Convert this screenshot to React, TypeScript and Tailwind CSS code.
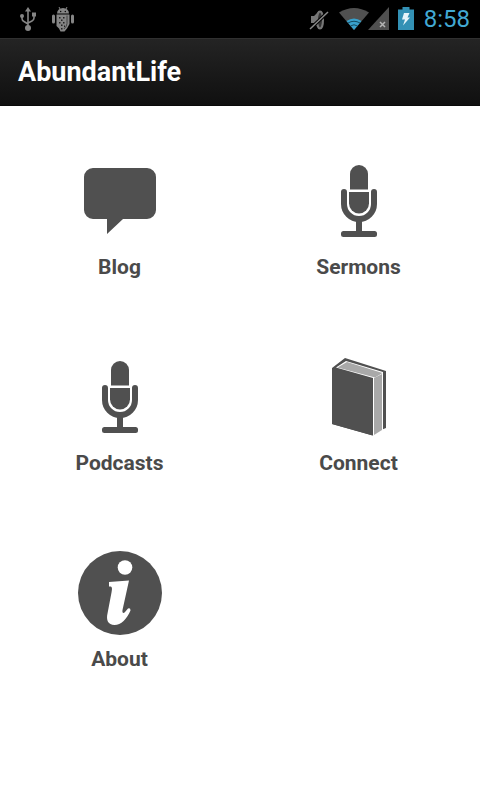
import { ReactNode } from "react";

function BlogIcon() {
  return (
    <svg viewBox="0 0 96 96" className="h-24 w-24 fill-[#505050]" aria-hidden="true">
      <path d="M21 15H75a9 9 0 0 1 9 9V57a9 9 0 0 1-9 9H51L35 81V66H21a9 9 0 0 1-9-9V24a9 9 0 0 1 9-9Z" />
    </svg>
  );
}

function MicIcon() {
  return (
    <svg viewBox="0 0 96 96" className="h-24 w-24 fill-[#505050]" aria-hidden="true">
      <path d="M39 36.5V21a9 9 0 0 1 18 0V36.5Z" />
      <path d="M38 39H58V50.5a10 10 0 0 1-20 0Z" />
      <path
        d="M33 39V51a15 15 0 0 0 30 0V39"
        fill="none"
        stroke="#505050"
        strokeWidth="6"
        strokeLinecap="round"
      />
      <rect x="45" y="67" width="6" height="13" />
      <rect x="30" y="78" width="36" height="6" rx="2.5" />
    </svg>
  );
}

function BookIcon() {
  return (
    <svg viewBox="0 0 96 96" className="h-24 w-24" aria-hidden="true">
      <path d="M21 19L34 9L75 22V79L70 81L62 86.5L21 75Z" fill="#505050" />
      <path d="M25 18.5L35 12L72 23V81L62 87V29Z" fill="#fff" />
      <path d="M26.5 18.5L36 13L71.5 24L64 28.5Z" fill="#a9a9a9" />
      <path d="M63 29L71 25V81L63 86Z" fill="#a9a9a9" />
      <path d="M21 19L61.5 30V86.5L21 75Z" fill="#505050" />
    </svg>
  );
}

function InfoIcon() {
  return (
    <svg viewBox="0 0 96 96" className="h-24 w-24" aria-hidden="true">
      <circle cx="48" cy="48" r="42" fill="#505050" />
      <circle cx="53" cy="22.5" r="7.3" fill="#fff" />
      <path
        d="M37 37L57 35.5L50.5 65C50 68 51.5 69 53 67L56 63.5Q58.5 62.5 58.5 65.5C55 74 49 80 42.5 80C36 80 34 75 35.5 68.5L39.500 47.5C40.5 42.5 40 41 37 41.5Z"
        fill="#fff"
      />
    </svg>
  );
}

function UsbIcon() {
  return (
    <svg viewBox="0 0 18 26" className="h-[26px] w-[18px]" fill="#858585" aria-hidden="true">
      <path d="M9 1L12 5.5H6Z" />
      <circle cx="9" cy="22" r="3" />
      <circle cx="3" cy="10" r="2" />
      <rect x="13" y="6.5" width="4" height="4" />
      <path
        d="M9 4V21M3 10V12.5Q3 14.5 5 15.5L9 18M15 9V12Q15 14 13 15L9 17"
        fill="none"
        stroke="#858585"
        strokeWidth="1.6"
      />
    </svg>
  );
}

function DebugIcon() {
  return (
    <svg viewBox="0 0 24 26" className="h-[26px] w-6" fill="#858585" aria-hidden="true">
      <path d="M6 7.5a6 5.5 0 0 1 12 0Z" />
      <path d="M8 1L9.5 4M16 1L14.5 4" stroke="#858585" />
      <circle cx="9.7" cy="5.5" r=".7" fill="#000" />
      <circle cx="14.3" cy="5.5" r=".7" fill="#000" />
      <rect x="1" y="8.5" width="3" height="9" rx="1.5" />
      <rect x="20" y="8.5" width="3" height="9" rx="1.5" />
      <path d="M5.5 8.5H18.5V18L16 22.5L13.5 25.5H9.5L8 22.5L5.5 20Z" />
      <path
        d="M8 11h1.5v1.5H8ZM12 11h1.5v1.5H12ZM10 13.5h1.5V15H10ZM8 16h1.5v1.5H8ZM12 16h1.5v1.5H12ZM10 18.5h1.5V20H10ZM10 22h1.5v1.5H10ZM13 19.5h1V21H13Z"
        fill="#222"
      />
      <path d="M16 9.5V17.5Q16 20 13 23" fill="none" stroke="#444" />
    </svg>
  );
}

function MutedIcon() {
  return (
    <svg viewBox="0 0 22 26" className="h-[26px] w-[22px]" aria-hidden="true">
      <path d="M3 10H6L11 5V22L6 17H3Z" fill="#777" />
      <ellipse cx="12" cy="14" rx="3" ry="8.5" fill="#333" stroke="#777" strokeWidth="2" />
      <path d="M2 23L20 6" stroke="#000" strokeWidth="3.5" />
      <path d="M2 23L20 6" stroke="#8a8a8a" strokeWidth="1.5" />
    </svg>
  );
}

function WifiIcon() {
  return (
    <svg viewBox="0 0 32 24" className="h-6 w-8" aria-hidden="true">
      <path d="M1 5.5Q16-3.5 31 5.5L16 23Z" fill="#505050" />
      <path d="M8.500 14Q16 9 23.5 14L16 23Z" fill="#38a0cb" />
      <path d="M10 16Q16 12.5 22 16M12.5 19Q16 16.5 19.5 19" fill="none" stroke="#124a60" />
    </svg>
  );
}

function SignalIcon() {
  return (
    <svg viewBox="0 0 22 24" className="h-6 w-[22px]" aria-hidden="true">
      <path d="M21 0V23H0Z" fill="#505050" />
      <path d="M12 15L17 20M17 15L12 20" stroke="#b5b5b5" strokeWidth="1.5" />
    </svg>
  );
}

function BatteryIcon() {
  return (
    <svg viewBox="0 0 16 24" className="h-6 w-4" aria-hidden="true">
      <path d="M4.5 0H11.5V2.5H16V23H0V2.5H4.5Z" fill="#3391b5" />
      <path d="M6 6H11.5L9.5 10.5H12L5 18.5L7 12.5H4Z" fill="#e8f5fa" />
    </svg>
  );
}

function StatusBar() {
  return (
    <div className="flex h-[38px] items-center justify-between bg-black pl-[19px] pr-2.5">
      <div className="flex items-center gap-3.5">
        <UsbIcon />
        <DebugIcon />
      </div>
      <div className="flex items-center gap-2">
        <MutedIcon />
        <div className="flex">
          <WifiIcon />
          <div className="-ml-0.5">
            <SignalIcon />
          </div>
        </div>
        <BatteryIcon />
        <time className="pl-0.5 text-2xl text-[#42a9d3]">8:58</time>
      </div>
    </div>
  );
}

const items: { label: string; icon: ReactNode }[] = [
  { label: "Blog", icon: <BlogIcon /> },
  { label: "Sermons", icon: <MicIcon /> },
  { label: "Podcasts", icon: <MicIcon /> },
  { label: "Connect", icon: <BookIcon /> },
  { label: "About", icon: <InfoIcon /> },
];

function App() {
  return (
    <div className="min-h-screen bg-white font-[Roboto,sans-serif]">
      <StatusBar />
      <header className="flex h-[68px] items-center border-y border-t-[#303030] border-b-[#0a0a0a] bg-linear-to-b from-[#242424] to-[#101010] px-[18px]">
        <h1 className="text-[27px] font-bold text-white">AbundantLife</h1>
      </header>
      <main className="grid grid-cols-2 pr-0.5 pt-[13px]">
        {items.map(({ label, icon }) => (
          <button
            key={label}
            type="button"
            className="flex h-49 flex-col items-center justify-center gap-1 text-[21px] leading-7 font-bold text-[#4a4a4a]"
          >
            {icon}
            {label}
          </button>
        ))}
      </main>
    </div>
  );
}

export default App;
